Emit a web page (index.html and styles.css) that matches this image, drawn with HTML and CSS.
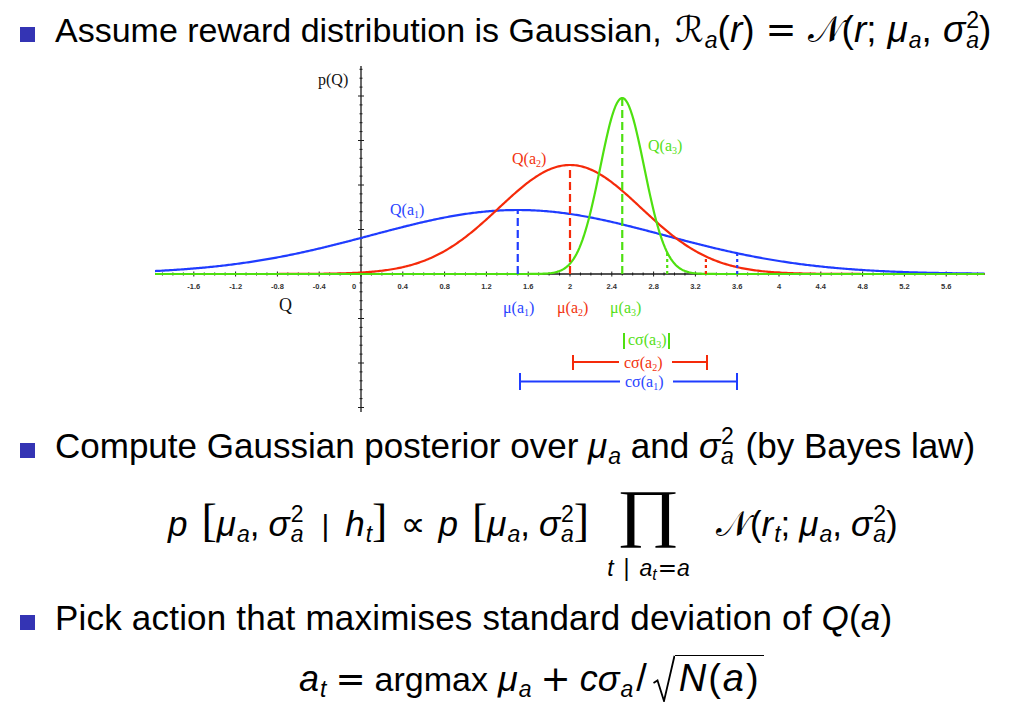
FILE: index.html
```html
<!DOCTYPE html>
<html>
<head>
<meta charset="utf-8">
<link rel="stylesheet" href="styles.css">
</head>
<body>
<div class="slide">
  <div class="item i1"><span class="sq"></span><span class="txt">Assume reward distribution is Gaussian, <span class="m1"><span class="cal">ℛ</span><span class="sb">a</span>(<i>r</i>)<span class="rel">=</span><span class="cal">𝒩</span>(<i>r</i>;<i class="th">μ</i><span class="sb">a</span>,<i class="th">σ</i><span class="ss"><span>2</span><i>a</i></span>)</span></span></div>

  <svg id="chart" class="chart" viewBox="0 62 1024 352" xmlns="http://www.w3.org/2000/svg">
    <line x1="155" y1="274" x2="985" y2="274" class="axis"/>
    <line x1="361" y1="66" x2="361" y2="412" class="axis"/>
    <path id="ticks" class="ticks" d=""/>
    <g class="tl">
      <text x="193.8" y="289">-1.6</text>
      <text x="235.6" y="289">-1.2</text>
      <text x="277.4" y="289">-0.8</text>
      <text x="319.2" y="289">-0.4</text>
      <text x="354" y="289">0</text>
      <text x="402.8" y="289">0.4</text>
      <text x="444.6" y="289">0.8</text>
      <text x="486.4" y="289">1.2</text>
      <text x="528.2" y="289">1.6</text>
      <text x="570" y="289">2</text>
      <text x="611.8" y="289">2.4</text>
      <text x="653.6" y="289">2.8</text>
      <text x="695.4" y="289">3.2</text>
      <text x="737.2" y="289">3.6</text>
      <text x="779" y="289">4</text>
      <text x="820.8" y="289">4.4</text>
      <text x="862.6" y="289">4.8</text>
      <text x="904.4" y="289">5.2</text>
      <text x="946.2" y="289">5.6</text>
    </g>
    <path id="cb" class="curve blue" d=""/>
    <path id="cr" class="curve red" d=""/>
    <path id="cg" class="curve green" d=""/>
    <line x1="517.75" y1="274" x2="517.75" y2="211" class="dash blue"/>
    <line x1="570" y1="274" x2="570" y2="166" class="dash red"/>
    <line x1="622.25" y1="274" x2="622.25" y2="99" class="dash green"/>
    <line x1="667.2" y1="274" x2="667.2" y2="253" class="dot green"/>
    <line x1="705.9" y1="274" x2="705.9" y2="256" class="dot red"/>
    <line x1="737.2" y1="274" x2="737.2" y2="253" class="dot blue"/>

    <g class="lbl">
      <text x="318" y="85" class="k">p(Q)</text>
      <text x="279" y="311" class="k qa">Q</text>
      <text x="390" y="215" class="fb">Q(a<tspan class="s" dy="3">1</tspan><tspan dy="-3">)</tspan></text>
      <text x="512" y="164" class="fr">Q(a<tspan class="s" dy="3">2</tspan><tspan dy="-3">)</tspan></text>
      <text x="648" y="151" class="fg">Q(a<tspan class="s" dy="3">3</tspan><tspan dy="-3">)</tspan></text>
      <text x="503" y="313" class="fb">μ(a<tspan class="s" dy="3">1</tspan><tspan dy="-3">)</tspan></text>
      <text x="557" y="313" class="fr">μ(a<tspan class="s" dy="3">2</tspan><tspan dy="-3">)</tspan></text>
      <text x="610" y="313" class="fg">μ(a<tspan class="s" dy="3">3</tspan><tspan dy="-3">)</tspan></text>
      <text x="628" y="345" class="fg">cσ(a<tspan class="s" dy="3">3</tspan><tspan dy="-3">)</tspan></text>
      <text x="624" y="368" class="fr">cσ(a<tspan class="s" dy="3">2</tspan><tspan dy="-3">)</tspan></text>
      <text x="625" y="387" class="fb">cσ(a<tspan class="s" dy="3">1</tspan><tspan dy="-3">)</tspan></text>
    </g>
    <path class="bar green" d="M624,333V349M669,333V349"/>
    <path class="bar red" d="M573,355V370M573,362H619M672,362H707M707,355V370"/>
    <path class="bar blue" d="M520,373V390M520,381.5H620M673,381.5H737M737,373V390"/>
  </svg>

  <div class="item i2"><span class="sq"></span><span class="txt">Compute Gaussian posterior over <i>μ</i><span class="sb">a</span> and <i>σ</i><span class="ss"><span>2</span><i>a</i></span> <span class="after">(by Bayes law)</span></span></div>

  <div class="formula f2"><i>p</i><span class="br l1">[</span><i>μ</i><span class="sb">a</span>,<i class="th">σ</i><span class="ss"><span>2</span><i>a</i></span><span class="mid">|</span><i>h</i><span class="sb">t</span><span class="br">]</span><span class="rel prop">∝</span><i>p</i><span class="br l1">[</span><i>μ</i><span class="sb">a</span>,<i class="th">σ</i><span class="ss"><span>2</span><i>a</i></span><span class="br">]</span><span class="bigop"><span class="op">∏</span><span class="lim"><i>t</i><span class="mid2">|</span><i>a</i><span class="sb2">t</span><span class="eq2">=</span><i>a</i></span></span><span class="cal">𝒩</span>(<i>r</i><span class="sb">t</span>;<i class="th">μ</i><span class="sb">a</span>,<i class="th">σ</i><span class="ss"><span>2</span><i>a</i></span>)</div>

  <div class="item i3"><span class="sq"></span><span class="txt">Pick action that maximises standard deviation of <i>Q</i>(<i>a</i>)</span></div>

  <div class="formula f3"><i>a</i><span class="sb">t</span><span class="rel">=</span><span class="am">argmax</span><i class="sp">μ</i><span class="sb">a</span><span class="rel">+</span><i>c</i><i>σ</i><span class="sb">a</span><span class="sl">/</span><span class="sqrt"><svg class="rad" viewBox="0 0 22 48" xmlns="http://www.w3.org/2000/svg"><path d="M0.5,28 L4.5,25.5 L11,46 L21.5,0.8"/></svg><span class="radicand"><i>N</i><span class="pa">(</span><i>a</i><span class="pa">)</span></span></span></div>
</div>
<script src="script.js"></script>
</body>
</html>
```
FILE: styles.css
```css
* { box-sizing: border-box; }
html, body { margin: 0; padding: 0; background: #fff; }
body {
  width: 1024px;
  height: 702px;
  overflow: hidden;
  font-family: "Liberation Sans", "DejaVu Sans", sans-serif;
  color: #000;
}
.slide { display: flex; flex-direction: column; padding-top: 10px; }

.item {
  display: flex;
  align-items: baseline;
  padding-left: 20px;
  font-size: 34px;
  line-height: 40px;
  white-space: nowrap;
}
.sq { flex: none; width: 15px; height: 15px; background: #3434b4; margin-right: 20px; }

i { font-style: italic; }
.th { margin-left: 9px; }
.sp { margin-left: 10px; }
.sb { font-size: 23px; font-style: italic; vertical-align: -6px; line-height: 0; margin-left: 1px; }
.ss {
  display: inline-flex;
  flex-direction: column;
  font-size: 23px;
  line-height: 20px;
  vertical-align: 14px;
  margin-left: 1px;
}
.cal { font-family: "DejaVu Sans", sans-serif; font-style: normal; }
.rel { font-family: "DejaVu Sans", sans-serif; margin: 0 9px; }
.m1 { font-size: 37px; margin-left: 4px; }
.m1 .cal { font-size: 36px; }
.m1 .th { margin-left: 11px; }
.m1 .rel { margin: 0 11px; }
.after { margin-left: 2px; }

.chart { display: block; margin-top: 12px; width: 1024px; height: 352px; }
.axis { stroke: #1a1a1a; stroke-width: 1.3; }
.ticks { stroke: #1a1a1a; stroke-width: 1; fill: none; }
.tl text { font-family: "Liberation Sans", sans-serif; font-size: 7.5px; font-weight: bold; fill: #333; text-anchor: middle; }
.curve { fill: none; stroke-width: 2.2; }
.curve.blue, .dash.blue, .dot.blue, .bar.blue { stroke: #1f3cff; }
.curve.red, .dash.red, .dot.red, .bar.red { stroke: #f52a0a; }
.curve.green, .dash.green, .dot.green, .bar.green { stroke: #4ee010; }
.dash { stroke-width: 2.2; stroke-dasharray: 8 4; }
.dot { stroke-width: 2.2; stroke-dasharray: 3 3; }
.bar { stroke-width: 2; fill: none; }
.lbl text { font-family: "Liberation Serif", serif; font-size: 16px; }
.lbl .s { font-size: 10px; }
.lbl .k { fill: #111; }
.lbl .qa { font-size: 18px; }
.lbl .fb { fill: #2a45ff; }
.lbl .fr { fill: #f2330f; }
.lbl .fg { fill: #55e018; }

.i2 { margin-top: 12px; font-size: 35px; }

.formula { font-size: 34px; line-height: 40px; white-space: nowrap; }
.f2 { padding-left: 168px; margin-top: 20px; font-size: 35px; }
.br { font-family: "Liberation Serif", serif; font-size: 46px; font-weight: normal; }
.br.l1 { margin-left: 14px; }
.mid { font-family: "Liberation Sans", sans-serif; margin: 0 16px 0 18px; font-size: 30px; }
.prop { margin: 0 13px; }
.bigop {
  display: inline-flex;
  flex-direction: column;
  align-items: center;
  vertical-align: 2px;
  margin: 0 26px 0 18px;
}
.op { font-family: "Liberation Serif", serif; font-size: 64px; line-height: 54px; transform: scaleX(1.2); }
.lim { font-size: 23px; line-height: 28px; margin-top: 14px; margin-bottom: -18px; }
.mid2 { margin: 0 10px; }
.sb2 { font-size: 16px; font-style: italic; vertical-align: -4px; margin-right: 1px; }
.eq2 { font-family: "DejaVu Sans", sans-serif; }

.i3 { margin-top: 27px; font-size: 35px; letter-spacing: 0.2px; }

.f3 { padding-left: 299px; margin-top: 17px; font-size: 36px; }
.am { font-size: 34px; }
.sl { margin: 0 2px 0 3px; font-size: 38px; }
.sqrt { display: inline-block; white-space: nowrap; margin-left: 4px; }
.rad { width: 22px; height: 48px; vertical-align: -12px; fill: none; stroke: #000; stroke-width: 1.8; }
.radicand { display: inline-block; border-top: 1.6px solid #000; font-size: 38px; line-height: 36px; padding: 4px 3px 0 4px; }
.pa { margin: 0 2px; }
```
FILE: script.js
```js
(function () {
  var X0 = 361, SX = 104.5, Y0 = 274;
  var d = '';
  var i, x, y, l;
  for (i = -19; i <= 59; i++) {
    x = X0 + i * SX / 10;
    l = (i % 4 === 0) ? 2.5 : 1.5;
    d += 'M' + x.toFixed(2) + ',' + (Y0 - l) + 'V' + (Y0 + l);
  }
  for (i = -15; i <= 23; i++) {
    y = Y0 - i * 8.9;
    if (y < 66) continue;
    l = (i % 5 === 0) ? 3 : 1.5;
    d += 'M' + (X0 - l) + ',' + y.toFixed(2) + 'H' + (X0 + l);
  }
  document.getElementById('ticks').setAttribute('d', d);

  function curve(id, mu, s, h) {
    var p = '';
    for (var px = 155; px <= 985; px += 1.5) {
      var xv = (px - X0) / SX;
      var yv = Y0 - h * Math.exp(-(xv - mu) * (xv - mu) / (2 * s * s));
      p += (p ? 'L' : 'M') + px.toFixed(1) + ',' + yv.toFixed(2);
    }
    document.getElementById(id).setAttribute('d', p);
  }
  curve('cb', 1.5, 1.4, 64);
  curve('cr', 2, 0.68, 109);
  curve('cg', 2.5, 0.21, 176);
})();
```
